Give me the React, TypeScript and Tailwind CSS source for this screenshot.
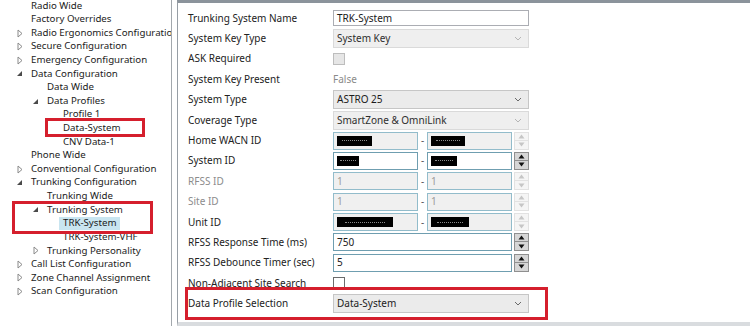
import React from "react";

type TreeItem = {
  label: string;
  level: 0 | 1 | 2;
  state?: "open" | "closed";
  selected?: boolean;
};

const tree: TreeItem[] = [
  { label: "Radio Wide", level: 0 },
  { label: "Factory Overrides", level: 0 },
  { label: "Radio Ergonomics Configuration", level: 0, state: "closed" },
  { label: "Secure Configuration", level: 0, state: "closed" },
  { label: "Emergency Configuration", level: 0, state: "closed" },
  { label: "Data Configuration", level: 0, state: "open" },
  { label: "Data Wide", level: 1 },
  { label: "Data Profiles", level: 1, state: "open" },
  { label: "Profile 1", level: 2 },
  { label: "Data-System", level: 2 },
  { label: "CNV Data-1", level: 2 },
  { label: "Phone Wide", level: 0 },
  { label: "Conventional Configuration", level: 0, state: "closed" },
  { label: "Trunking Configuration", level: 0, state: "open" },
  { label: "Trunking Wide", level: 1 },
  { label: "Trunking System", level: 1, state: "open" },
  { label: "TRK-System", level: 2, selected: true },
  { label: "TRK-System-VHF", level: 2 },
  { label: "Trunking Personality", level: 1, state: "closed" },
  { label: "Call List Configuration", level: 0, state: "closed" },
  { label: "Zone Channel Assignment", level: 0, state: "closed" },
  { label: "Scan Configuration", level: 0, state: "closed" },
];

const indent = {
  0: "pl-[15px]",
  1: "pl-[31px]",
  2: "pl-[47px]",
};

function Expander({ state }: { state?: "open" | "closed" }) {
  return (
    <span className="flex w-[16px] shrink-0 items-center">
      {state === "closed" ? (
        <svg width="8" height="9" viewBox="0 0 8 9" className="ml-[2px]">
          <path d="M1 1 L5 4.5 L1 8 Z" fill="none" stroke="#8a8a8a" strokeWidth="1" />
        </svg>
      ) : state === "open" ? (
        <svg width="8" height="9" viewBox="0 0 8 9" className="ml-[1px]">
          <path d="M6 2 L6 7 L1 7 Z" fill="#4a4a4a" />
        </svg>
      ) : null}
    </span>
  );
}

function Tree() {
  return (
    <div className="w-[172px] shrink-0 overflow-hidden border-r border-[#a3a8ad] text-[9.7px] text-[#1b1b1b]">
      <div className="-mt-[1px]">
        {tree.map((item) => (
          <div
            key={item.label}
            className={`flex h-[13.62px] items-center whitespace-nowrap ${indent[item.level]}`}
          >
            <Expander state={item.state} />
            <span
              className={
                item.selected
                  ? "-ml-[4px] flex h-[13px] items-center bg-[#c9e5f0] px-[4px]"
                  : ""
              }
            >
              {item.label}
            </span>
          </div>
        ))}
      </div>
    </div>
  );
}

function Chevron({ dark }: { dark?: boolean }) {
  return (
    <svg width="8" height="5" viewBox="0 0 8 5">
      <path
        d="M1 1 L4 4 L7 1"
        fill="none"
        stroke={dark ? "#6a6a6a" : "#b5b5b5"}
        strokeWidth="1"
      />
    </svg>
  );
}

function Combo({ value, enabled }: { value: string; enabled?: boolean }) {
  return (
    <div
      className={`flex h-[19px] w-[196px] items-center justify-between border pl-[3px] pr-[6px] ${
        enabled
          ? "border-[#c6c6c6] bg-[#ebebeb] text-[#1b1b1b]"
          : "border-[#dadada] bg-[#efefef] text-[#2e2e2e]"
      }`}
    >
      <span>{value}</span>
      <Chevron dark={enabled} />
    </div>
  );
}

function Arrow({ up, dark }: { up?: boolean; dark?: boolean }) {
  return (
    <svg width="7" height="5" viewBox="0 0 7 5">
      <path d={up ? "M0.5 4.5 L3.5 0.5 L6.5 4.5 Z" : "M0.5 0.5 L3.5 4.5 L6.5 0.5 Z"} fill={dark ? "#111" : "#c6c6c6"} />
    </svg>
  );
}

function Spinner({ enabled }: { enabled?: boolean }) {
  const half = enabled
    ? "flex h-[9px] items-center justify-center border border-[#8f8f8f] bg-[#d6d6d6]"
    : "flex h-[9px] items-center justify-center border border-[#e2e2e2] bg-[#f5f5f5]";
  return (
    <div className="ml-[2px] flex w-[15px] flex-col">
      <div className={half}>
        <Arrow up dark={enabled} />
      </div>
      <div className={`${half} border-t-0`}>
        <Arrow dark={enabled} />
      </div>
    </div>
  );
}

// blacked-out value, faint dashes of the hidden digits showing through
function Mask({ width }: { width: string }) {
  return (
    <span className={`flex h-[10px] items-center justify-center bg-black ${width}`}>
      <span className="w-[70%] border-t border-dotted border-[#8c8c8c]" />
    </span>
  );
}

type Part = { text?: string; mask?: string };

function Field({ part, enabled, wide }: { part: Part; enabled?: boolean; wide?: boolean }) {
  return (
    <div
      className={`flex h-[18px] items-center border px-[3px] ${wide ? "w-[179px]" : "w-[85px]"} ${
        enabled
          ? "border-[#6f9eb0] bg-white text-[#1b1b1b]"
          : "border-[#92bccb] bg-[#f0f0f0] text-[#9a9a9a]"
      }`}
    >
      {part.mask ? <Mask width={part.mask} /> : part.text}
    </div>
  );
}

function SplitField({ a, b, enabled }: { a: Part; b: Part; enabled?: boolean }) {
  return (
    <div className="flex items-center">
      <Field part={a} enabled={enabled} />
      <span className="w-[9px] text-center text-[#555]">-</span>
      <Field part={b} enabled={enabled} />
      <Spinner enabled={enabled} />
    </div>
  );
}

function CheckBox({ enabled }: { enabled?: boolean }) {
  return (
    <div
      className={`h-[12px] w-[12px] border ${
        enabled ? "border-[#6b6b6b] bg-white" : "border-[#bdbdbd] bg-[#e6e6e6]"
      }`}
    />
  );
}

type Row = { label: string; muted?: boolean; control: React.ReactNode };

const rows: Row[] = [
  {
    label: "Trunking System Name",
    control: (
      <div className="flex h-[16px] w-[196px] items-center border border-[#abadb3] bg-white px-[3px] text-[#1b1b1b]">
        TRK-System
      </div>
    ),
  },
  { label: "System Key Type", control: <Combo value="System Key" /> },
  { label: "ASK Required", control: <CheckBox /> },
  { label: "System Key Present", control: <span className="text-[#8a8a8a]">False</span> },
  { label: "System Type", control: <Combo value="ASTRO 25" enabled /> },
  { label: "Coverage Type", control: <Combo value="SmartZone & OmniLink" /> },
  {
    label: "Home WACN ID",
    control: <SplitField a={{ mask: "w-[35px]" }} b={{ mask: "w-[34px]" }} />,
  },
  {
    label: "System ID",
    control: <SplitField a={{ mask: "w-[22px]" }} b={{ mask: "w-[26px]" }} enabled />,
  },
  { label: "RFSS ID", muted: true, control: <SplitField a={{ text: "1" }} b={{ text: "1" }} /> },
  { label: "Site ID", muted: true, control: <SplitField a={{ text: "1" }} b={{ text: "1" }} /> },
  {
    label: "Unit ID",
    control: <SplitField a={{ mask: "w-[56px]" }} b={{ mask: "w-[38px]" }} />,
  },
  {
    label: "RFSS Response Time (ms)",
    control: (
      <div className="flex items-center">
        <Field part={{ text: "750" }} enabled wide />
        <Spinner enabled />
      </div>
    ),
  },
  {
    label: "RFSS Debounce Timer (sec)",
    control: (
      <div className="flex items-center">
        <Field part={{ text: "5" }} enabled wide />
        <Spinner enabled />
      </div>
    ),
  },
  { label: "Non-Adjacent Site Search", control: <CheckBox enabled /> },
  { label: "Data Profile Selection", control: <Combo value="Data-System" enabled /> },
];

function Properties() {
  return (
    <div className="ml-[5px] flex-1 border-l border-t-[3px] border-b-4 border-l-[#979ea5] border-t-[#8b939b] border-b-[#d9dcdf] bg-white pl-[10px] pt-[5px] text-[10px]">
      {rows.map((row) => (
        <div key={row.label} className="flex h-[20.4px] items-center">
          <span
            className={`w-[145px] shrink-0 whitespace-nowrap ${
              row.muted ? "text-[#8c8c8c]" : "text-[#222]"
            }`}
          >
            {row.label}
          </span>
          {row.control}
        </div>
      ))}
    </div>
  );
}

export default function App() {
  return (
    <div className="relative flex h-[326px] w-[750px] overflow-hidden bg-white font-['Noto_Sans','DejaVu_Sans',sans-serif]">
      <Tree />
      <Properties />

      {/* annotation boxes */}
      <div className="pointer-events-none absolute left-[45px] top-[118px] h-[19px] w-[100px] border-[3px] border-[#d51f2d]" />
      <div className="pointer-events-none absolute left-[12px] top-[201px] h-[33px] w-[141px] border-[3px] border-[#d51f2d]" />
      <div className="pointer-events-none absolute left-[185px] top-[287px] h-[33px] w-[363px] border-[3px] border-[#d51f2d]" />
    </div>
  );
}
